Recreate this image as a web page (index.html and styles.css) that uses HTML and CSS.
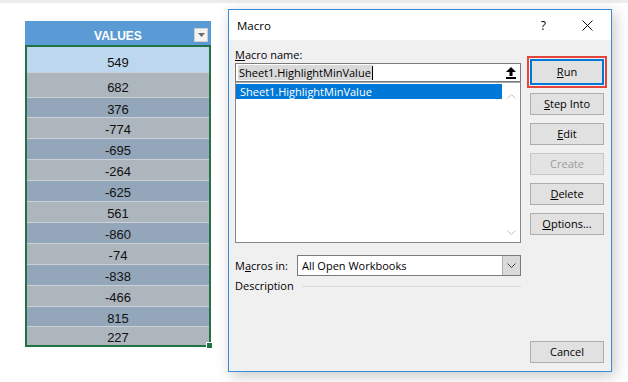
FILE: index.html
```html
<!DOCTYPE html>
<html lang="en">
<head>
  <meta charset="UTF-8" />
  <title>Macro dialog</title>
  <link rel="stylesheet" href="styles.css">
</head>
<body>
  <div class="top-strip"></div>
  <div class="scene">

    <!-- Sheet column -->
    <div class="sheet">
      <div class="sheet-head">
        <span class="head-label">VALUES</span>
        <span class="filter-btn">
          <svg width="7" height="4" viewBox="0 0 7 4"><polygon points="0,0 7,0 3.5,4" fill="#6b6b6b"/></svg>
        </span>
      </div>
      <div class="sheet-body">
        <div class="cell sel h25">549</div>
        <div class="cell light h25">682</div>
        <div class="cell dark h20">376</div>
        <div class="cell light">-774</div>
        <div class="cell dark">-695</div>
        <div class="cell light">-264</div>
        <div class="cell dark">-625</div>
        <div class="cell light">561</div>
        <div class="cell dark">-860</div>
        <div class="cell light">-74</div>
        <div class="cell dark">-838</div>
        <div class="cell light">-466</div>
        <div class="cell dark h20">815</div>
        <div class="cell light h19">227</div>
        <span class="fill-handle"></span>
      </div>
    </div>

    <!-- Macro dialog -->
    <div class="dialog">
      <div class="titlebar">
        <span class="title">Macro</span>
        <span class="help">?</span>
        <span class="close">
          <svg width="11" height="11" viewBox="0 0 11 11"><path d="M0.5 0.5 L10.5 10.5 M10.5 0.5 L0.5 10.5" stroke="#111" stroke-width="1"/></svg>
        </span>
      </div>

      <div class="dialog-body">
        <div class="left-col">
          <div class="field-label"><u>M</u>acro name:</div>
          <div class="name-input">
            <span class="name-text">Sheet1.HighlightMinValue</span>
            <span class="caret"></span>
            <span class="up-btn">
              <svg width="10" height="12" viewBox="0 0 10 12">
                <polygon points="5,0 10,5 6.5,5 6.5,9 3.5,9 3.5,5 0,5" fill="#000"/>
                <rect x="0" y="10" width="10" height="2" fill="#000"/>
              </svg>
            </span>
          </div>
          <div class="macro-list">
            <div class="list-items">
              <div class="list-item active">Sheet1.HighlightMinValue</div>
            </div>
            <div class="list-scroll">
              <svg width="9" height="5" viewBox="0 0 9 5"><path d="M0.5 4.5 L4.5 0.5 L8.5 4.5" fill="none" stroke="#c2c2c2"/></svg>
              <svg width="9" height="5" viewBox="0 0 9 5"><path d="M0.5 0.5 L4.5 4.5 L8.5 0.5" fill="none" stroke="#c2c2c2"/></svg>
            </div>
          </div>

          <div class="macros-in">
            <span class="macros-label">M<u>a</u>cros in:</span>
            <div class="select">
              <span class="select-text">All Open Workbooks</span>
              <span class="select-btn">
                <svg width="9" height="5" viewBox="0 0 9 5"><path d="M0.5 0.5 L4.5 4.5 L8.5 0.5" fill="none" stroke="#444"/></svg>
              </span>
            </div>
          </div>

          <div class="desc">
            <span>Description</span>
            <span class="desc-line"></span>
          </div>
        </div>

        <div class="right-col">
          <div class="btn btn-default"><u>R</u>un</div>
          <div class="btn"><u>S</u>tep Into</div>
          <div class="btn"><u>E</u>dit</div>
          <div class="btn btn-disabled">Create</div>
          <div class="btn"><u>D</u>elete</div>
          <div class="btn"><u>O</u>ptions...</div>
          <div class="btn btn-cancel">Cancel</div>
        </div>
      </div>
    </div>

  </div>
</body>
</html>
```

FILE: styles.css
```css
* {
  box-sizing: border-box;
}

body {
  margin: 0;
  width: 628px;
  height: 382px;
  overflow: hidden;
  background: #fff;
  font-family: "Open Sans", "Noto Sans", sans-serif;
  font-size: 11px;
  color: #000;
}

.top-strip {
  height: 3px;
  background: #ececec;
}

.scene {
  display: flex;
  align-items: flex-start;
}

/* Sheet */
.sheet {
  width: 186px;
  margin-left: 25px;
  margin-top: 18px;
  font-family: "Liberation Sans", Arial, sans-serif;
}

.sheet-head {
  height: 24px;
  background: #5b9bd5;
  display: flex;
  padding-left: 17px;
}

.head-label {
  flex: 1;
  text-align: center;
  color: #fff;
  font-weight: bold;
  font-size: 12px;
  line-height: 14px;
  padding-top: 8px;
}

.filter-btn {
  align-self: flex-end;
  width: 14px;
  height: 14px;
  margin: 0 3px 3px 0;
  background: #f4f4f4;
  border: 1px solid #cfcfcf;
  display: flex;
  align-items: center;
  justify-content: center;
}

.sheet-body {
  position: relative;
  border: 2px solid #217346;
  background: #fff;
}

.cell {
  height: 21px;
  display: flex;
  align-items: center;
  justify-content: center;
  padding-top: 3px;
  font-size: 13px;
  color: #111;
  border-top: 1px solid #c9d0d8;
}

.cell.h25 { height: 25px; padding-top: 5px; }
.cell.h20 { height: 20px; }
.cell.h19 { height: 19px; }

.cell.sel {
  background: #bdd7ee;
  border-top: none;
}

.cell.light { background: #adb5bd; }
.cell.dark { background: #94a6b9; }

.fill-handle {
  position: absolute;
  right: -4px;
  bottom: -4px;
  width: 7px;
  height: 7px;
  background: #217346;
  border: 1px solid #fff;
}

/* Dialog */
.dialog {
  width: 384px;
  height: 363px;
  margin-left: 17px;
  margin-top: 6px;
  border: 1px solid #3b8cd8;
  background: #f0f0f0;
  display: flex;
  flex-direction: column;
  box-shadow: 3px 4px 14px rgba(0, 0, 0, 0.22);
}

.titlebar {
  height: 30px;
  background: #fff;
  display: flex;
  align-items: center;
  padding-left: 8px;
}

.title {
  font-size: 11.5px;
}

.help {
  margin-left: auto;
  font-size: 12px;
}

.close {
  display: flex;
  margin-left: 36px;
  margin-right: 18px;
}

.dialog-body {
  flex: 1;
  display: flex;
  gap: 9px;
  padding: 0 7px 8px 6px;
}

.left-col {
  width: 286px;
  padding-top: 7px;
}

.field-label {
  height: 16px;
  line-height: 16px;
}

.name-input {
  height: 19px;
  border: 1px solid #7a7a7a;
  background: #fff;
  display: flex;
  align-items: center;
  padding-left: 2px;
}

.name-text {
  background: #d9d9d9;
  line-height: 15px;
  padding: 0 1px;
}

.caret {
  width: 1px;
  height: 14px;
  background: #000;
}

.up-btn {
  margin-left: auto;
  margin-right: 1px;
  width: 17px;
  height: 16px;
  background: #fff;
  display: flex;
  align-items: center;
  justify-content: center;
}

.macro-list {
  height: 161px;
  border: 1px solid #828790;
  border-top-color: #a9a9a9;
  background: #fff;
  display: flex;
}

.list-items {
  flex: 1;
  padding: 1px 0 1px 0;
}

.list-item {
  height: 15px;
  line-height: 15px;
  padding-left: 4px;
}

.list-item.active {
  background: #0078d7;
  color: #fff;
}

.list-scroll {
  width: 18px;
  display: flex;
  flex-direction: column;
  justify-content: space-between;
  align-items: center;
  padding: 11px 0 7px;
}

.macros-in {
  display: flex;
  align-items: center;
  margin-top: 12px;
}

.macros-label {
  width: 62px;
}

.select {
  flex: 1;
  height: 21px;
  border: 1px solid #7a7a7a;
  background: #fff;
  display: flex;
  align-items: center;
}

.select-text {
  flex: 1;
  padding-left: 4px;
}

.select-btn {
  width: 18px;
  height: 19px;
  background: #dadada;
  border-left: 1px solid #adadad;
  display: flex;
  align-items: center;
  justify-content: center;
}

.desc {
  display: flex;
  align-items: center;
  margin-top: 2px;
  line-height: 16px;
}

.desc-line {
  flex: 1;
  height: 1px;
  background: #dadada;
  margin-left: 8px;
}

.right-col {
  width: 74px;
  display: flex;
  flex-direction: column;
  gap: 8px;
  padding-top: 19px;
}

.btn {
  height: 22px;
  line-height: 20px;
  text-align: center;
  background: #e1e1e1;
  border: 1px solid #adadad;
}

.btn-default {
  height: 26px;
  line-height: 22px;
  border: 2px solid #0078d7;
  outline: 2px solid #e2463d;
  outline-offset: 1px;
}

.btn-disabled {
  color: #9d9d9d;
  border-color: #c6c6c6;
  background: #e3e3e3;
}

.btn-cancel {
  margin-top: auto;
}
```
